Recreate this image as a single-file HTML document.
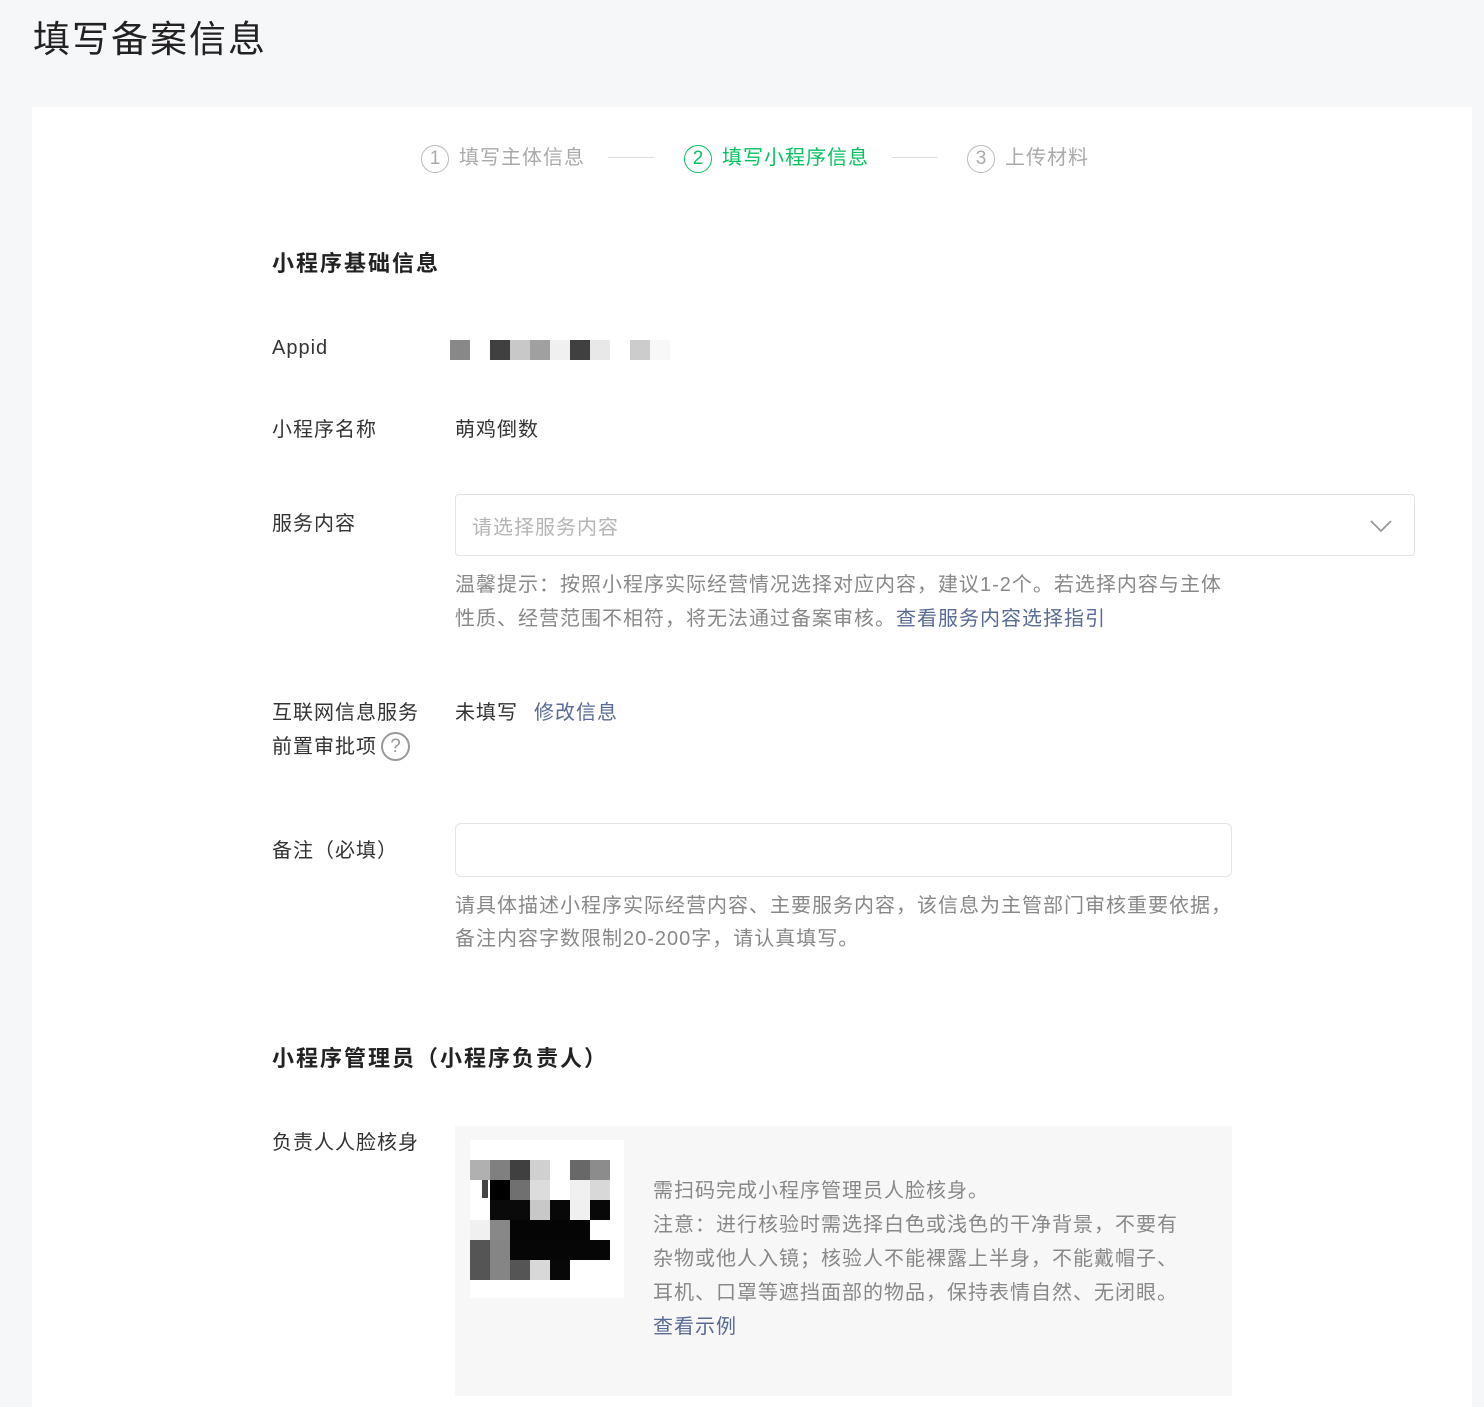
<!DOCTYPE html>
<html><head><meta charset="utf-8"><style>
*{margin:0;padding:0;box-sizing:border-box}
body{width:1484px;height:1386px;background:#f6f7f9;font-family:"Liberation Sans","Noto Sans CJK SC",sans-serif;color:#333;position:relative;overflow:hidden}
.a{position:absolute;white-space:nowrap}
.card{position:absolute;left:32px;top:107px;width:1440px;height:1300px;background:#fff}
.l{font-size:20px;color:#333;line-height:34px;letter-spacing:1px}
.h{font-size:20px;color:#888;line-height:34px;letter-spacing:1px}
.lk{color:#576b95}
.circ{display:inline-block;width:28px;height:28px;border:1.5px solid #bbb;border-radius:50%;text-align:center;line-height:25px;font-size:19px;color:#aaa;vertical-align:middle;margin-right:10px;letter-spacing:0}
.st{font-size:20px;color:#aaa;top:141px;letter-spacing:1px}
.line{position:absolute;top:157px;height:1px;background:#ddd;width:46px}
.px{position:absolute;width:20px;height:20px}
.sec{font-size:22px;font-weight:bold;color:#222;line-height:34px;letter-spacing:2px}
</style></head><body>
<div class="a" style="left:33px;top:15px;font-size:37px;color:#222;line-height:50px;letter-spacing:2px">填写备案信息</div>
<div class="card"></div>
<div class="a st" style="left:421px"><span class="circ">1</span>填写主体信息</div>
<div class="line" style="left:608px"></div>
<div class="a st" style="left:684px;color:#07c160"><span class="circ" style="border-color:#07c160;color:#07c160">2</span>填写小程序信息</div>
<div class="line" style="left:892px"></div>
<div class="a st" style="left:967px"><span class="circ">3</span>上传材料</div>

<div class="a sec" style="left:272px;top:247px">小程序基础信息</div>
<div class="a l" style="left:272px;top:331px">Appid</div>
<div class="a l" style="left:272px;top:413px">小程序名称</div>
<div class="a l" style="left:455px;top:413px">萌鸡倒数</div>
<div class="a l" style="left:272px;top:507px">服务内容</div>
<div class="a" style="left:455px;top:494px;width:960px;height:62px;border:1px solid #e3e3e3;border-radius:4px"></div>
<div class="a" style="left:472px;top:511px;font-size:20px;color:#b5b5b5;line-height:34px;letter-spacing:1px">请选择服务内容</div>
<svg class="a" style="left:1370px;top:519px" width="22" height="14"><path d="M1 2 L11 12 L21 2" fill="none" stroke="#999" stroke-width="1.8"/></svg>
<div class="a h" style="left:455px;top:568px">温馨提示：按照小程序实际经营情况选择对应内容，建议1-2个。若选择内容与主体</div>
<div class="a h" style="left:455px;top:602px">性质、经营范围不相符，将无法通过备案审核。<span class="lk">查看服务内容选择指引</span></div>
<div class="a l" style="left:272px;top:696px">互联网信息服务</div>
<div class="a l" style="left:272px;top:730px">前置审批项</div>
<div class="a" style="left:381px;top:732px;width:29px;height:29px;border:2px solid #999;border-radius:50%;text-align:center;font-size:19px;line-height:25px;color:#999">?</div>
<div class="a l" style="left:455px;top:696px">未填写<span class="lk" style="margin-left:16px">修改信息</span></div>
<div class="a l" style="left:272px;top:834px">备注（必填）</div>
<div class="a" style="left:455px;top:823px;width:777px;height:54px;border:1px solid #e3e3e3;border-radius:6px"></div>
<div class="a h" style="left:455px;top:889px">请具体描述小程序实际经营内容、主要服务内容，该信息为主管部门审核重要依据，</div>
<div class="a h" style="left:455px;top:922px">备注内容字数限制20-200字，请认真填写。</div>

<div class="a sec" style="left:272px;top:1042px">小程序管理员（小程序负责人）</div>
<div class="a l" style="left:272px;top:1126px">负责人人脸核身</div>
<div class="a" style="left:455px;top:1126px;width:777px;height:270px;background:#f7f7f7"></div>
<div class="a" style="left:470px;top:1140px;width:154px;height:158px;background:#fff"></div>
<div class="a h" style="left:653px;top:1174px">需扫码完成小程序管理员人脸核身。</div>
<div class="a h" style="left:653px;top:1208px">注意：进行核验时需选择白色或浅色的干净背景，不要有</div>
<div class="a h" style="left:653px;top:1242px">杂物或他人入镜；核验人不能裸露上半身，不能戴帽子、</div>
<div class="a h" style="left:653px;top:1276px">耳机、口罩等遮挡面部的物品，保持表情自然、无闭眼。</div>
<div class="a h lk" style="left:653px;top:1310px">查看示例</div>

<div class="px" style="left:450px;top:340px;background:#888"></div>
<div class="px" style="left:490px;top:340px;background:#404040"></div>
<div class="px" style="left:510px;top:340px;background:#c8c8c8"></div>
<div class="px" style="left:530px;top:340px;background:#a0a0a0"></div>
<div class="px" style="left:550px;top:340px;background:#f0f0f0"></div>
<div class="px" style="left:570px;top:340px;background:#404040"></div>
<div class="px" style="left:590px;top:340px;background:#e8e8e8"></div>
<div class="px" style="left:630px;top:340px;background:#ccc"></div>
<div class="px" style="left:650px;top:340px;background:#f8f8f8"></div>

<svg class="a" style="left:470px;top:1160px" width="140" height="120" shape-rendering="crispEdges">
<g>
<rect x="0" y="0" width="20" height="20" fill="#b0b0b0"/><rect x="20" y="0" width="20" height="20" fill="#808080"/><rect x="40" y="0" width="20" height="20" fill="#404040"/><rect x="60" y="0" width="20" height="20" fill="#d0d0d0"/><rect x="100" y="0" width="20" height="20" fill="#686868"/><rect x="120" y="0" width="20" height="20" fill="#8c8c8c"/>
<rect x="12" y="20" width="6" height="18" fill="#444"/>
<rect x="20" y="20" width="20" height="20" fill="#000"/><rect x="40" y="20" width="20" height="20" fill="#707070"/><rect x="60" y="20" width="20" height="20" fill="#dcdcdc"/><rect x="100" y="20" width="20" height="20" fill="#f0f0f0"/><rect x="120" y="20" width="20" height="20" fill="#d8d8d8"/>
<rect x="20" y="40" width="40" height="20" fill="#0a0a0a"/><rect x="60" y="40" width="20" height="20" fill="#c8c8c8"/><rect x="80" y="40" width="20" height="20" fill="#080808"/><rect x="100" y="40" width="20" height="20" fill="#f0f0f0"/><rect x="120" y="40" width="20" height="20" fill="#080808"/>
<rect x="0" y="60" width="20" height="20" fill="#f0f0f0"/><rect x="20" y="60" width="20" height="20" fill="#888"/><rect x="40" y="60" width="80" height="20" fill="#050505"/>
<rect x="0" y="80" width="20" height="40" fill="#555"/><rect x="20" y="80" width="20" height="40" fill="#858585"/><rect x="40" y="80" width="100" height="20" fill="#060606"/>
<rect x="40" y="100" width="20" height="20" fill="#555"/><rect x="60" y="100" width="20" height="20" fill="#d8d8d8"/><rect x="80" y="100" width="20" height="20" fill="#080808"/>
</g></svg>
</body></html>
